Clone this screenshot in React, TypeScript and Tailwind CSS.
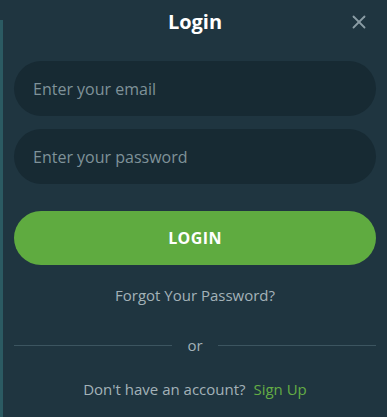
import { X } from "lucide-react";

export default function App() {
  return (
    <div className="flex h-[417px] w-[387px] bg-[#1f3540] font-['Open_Sans',sans-serif]">
      <div className="mt-[20px] w-[3px] shrink-0 bg-[#2b5a62]" />
      <div className="relative flex flex-1 flex-col px-[11px]">
        <h1 className="pt-[8px] text-center text-[20px] font-bold leading-[28px] text-white">Login</h1>
        <button className="absolute right-[17px] top-[11px] text-[#8a9ca4]">
          <X size={22} strokeWidth={2} />
        </button>

        <div className="mt-[25px] flex flex-col gap-[13px]">
          <input
            placeholder="Enter your email"
            className="h-[55px] rounded-full bg-[#172a33] px-[19px] text-[16px] text-white outline-none placeholder:text-[#7f9299]"
          />
          <input
            type="password"
            placeholder="Enter your password"
            className="h-[55px] rounded-full bg-[#172a33] px-[19px] text-[16px] text-white outline-none placeholder:text-[#7f9299]"
          />
        </div>

        <button className="mt-[27px] h-[54px] rounded-full bg-[#5fab40] text-[16px] font-bold tracking-wide text-white">
          LOGIN
        </button>

        <p className="mt-[20px] text-center text-[15px] leading-[20px] text-[#a3b2b8]">Forgot Your Password?</p>

        <div className="mt-[30px] flex h-[20px] items-center">
          <div className="h-px flex-1 bg-[#3c5560]" />
          <span className="px-[15px] text-[15px] leading-[20px] text-[#a3b2b8]">or</span>
          <div className="h-px flex-1 bg-[#3c5560]" />
        </div>

        <p className="mt-[24px] text-center text-[15px] leading-[20px] text-[#a3b2b8]">
          Don't have an account? <span className="ml-1 text-[#64ad45]">Sign Up</span>
        </p>
      </div>
    </div>
  );
}
